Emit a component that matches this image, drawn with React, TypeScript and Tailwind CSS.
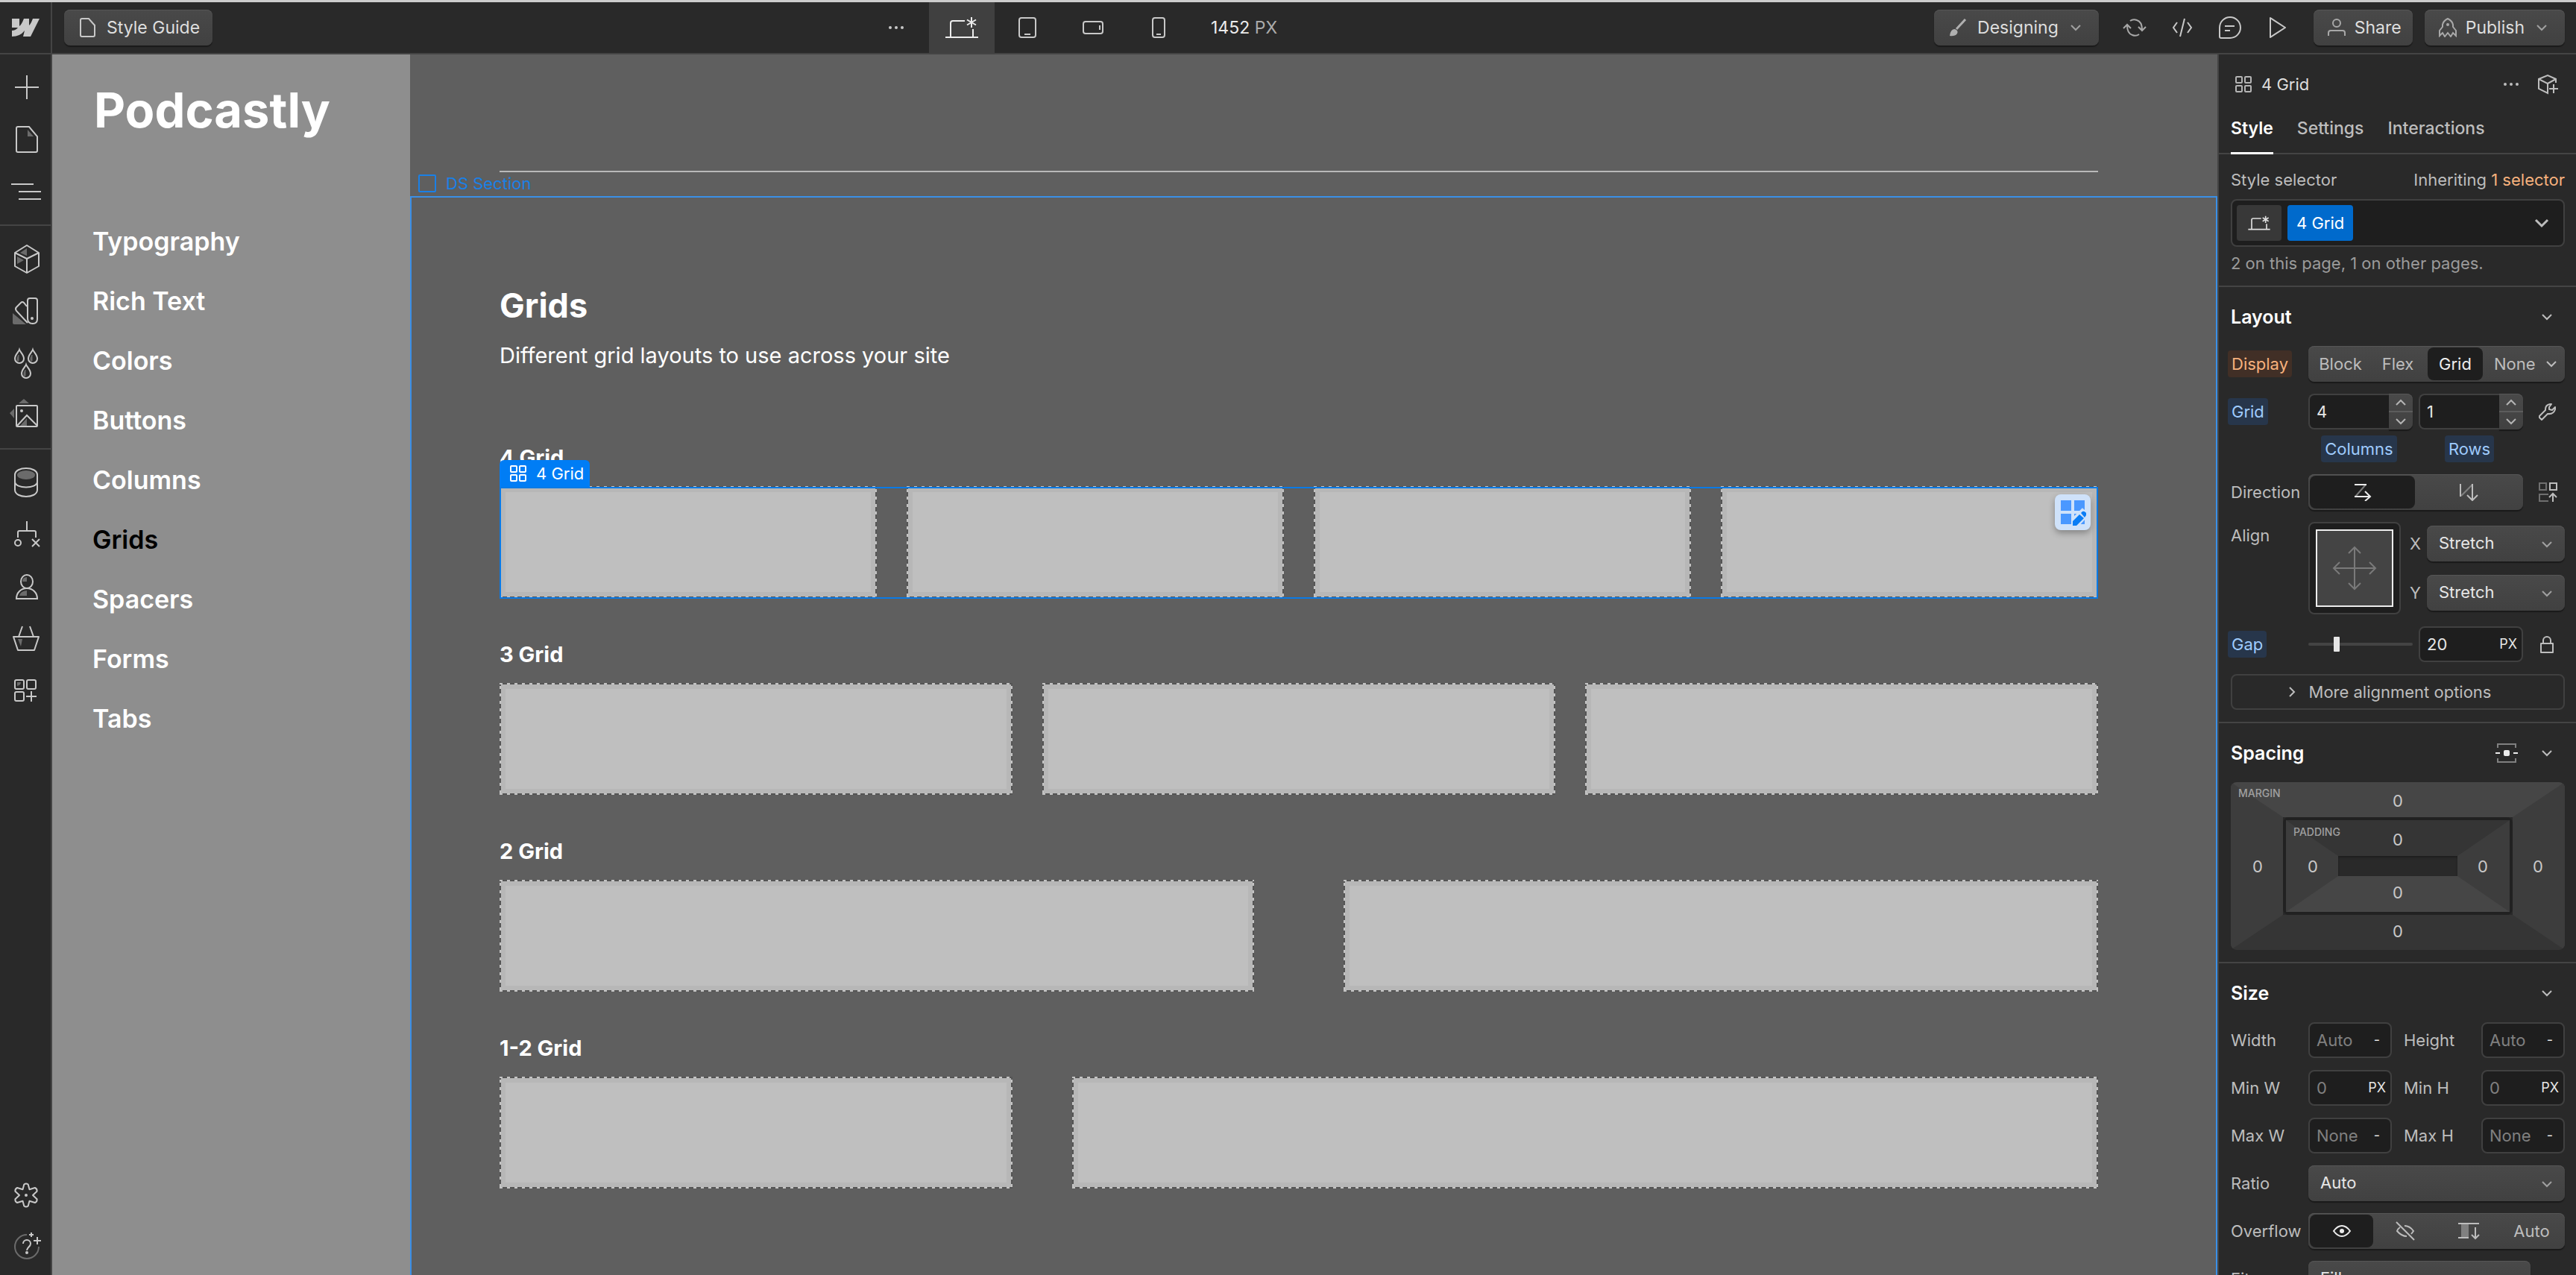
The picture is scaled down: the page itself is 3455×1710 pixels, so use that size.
import type { ReactNode } from 'react';

const raised =
  'bg-linear-to-b from-[#494949] to-[#414141] shadow-[inset_0_1px_0_#565656,0_2px_1px_#1a1a1a]';
const well = 'border-2 border-[#404040] bg-[#1e1e1e]';

function Svg({ w, h, className = '', children }: { w: number; h: number; className?: string; children: ReactNode }) {
  return (
    <svg
      width={w}
      height={h}
      viewBox={`0 0 ${w} ${h}`}
      fill="none"
      stroke="currentColor"
      strokeWidth="2"
      aria-hidden="true"
      className={`shrink-0 ${className}`}
    >
      {children}
    </svg>
  );
}

function Chevron({ className = '' }: { className?: string }) {
  return (
    <Svg w={14} h={10} className={className}>
      <path d="M1 2L7 8L13 2" />
    </Svg>
  );
}

function Dots() {
  return (
    <Svg w={22} h={6}>
      <g fill="currentColor" stroke="none">
        <circle cx="3" cy="3" r="2" />
        <circle cx="11" cy="3" r="2" />
        <circle cx="19" cy="3" r="2" />
      </g>
    </Svg>
  );
}

function FourSquares({ className = '' }: { className?: string }) {
  return (
    <Svg w={24} h={24} className={className}>
      <rect x="2" y="2" width="8" height="8" rx="1" />
      <rect x="14" y="2" width="8" height="8" rx="1" />
      <rect x="2" y="14" width="8" height="8" rx="1" />
      <rect x="14" y="14" width="8" height="8" rx="1" />
    </Svg>
  );
}

function LaptopPaths() {
  return (
    <>
      <path d="M0 28H44M7 28V9q0-3 3-3H26M37 28V17" />
      <path d="M35 1V15M29 4.500L41 11.500M41 4.500L29 11.500" />
    </>
  );
}

const DIM = '#6b6b6b';

const railGroups: { label: string; icon: ReactNode }[][] = [
  [
    { label: 'Add elements', icon: <path d="M8 22H40M24 6V38" /> },
    {
      label: 'Pages',
      icon: (
        <>
          <path d="M25 9V18H33Z" fill={DIM} stroke="none" />
          <path d="M10 7a2 2 0 0 1 2-2H27L38 18V37a2 2 0 0 1-2 2H12a2 2 0 0 1-2-2Z" />
        </>
      ),
    },
    { label: 'Navigator', icon: <path d="M3 12H33M13 22H43M13 32H43" /> },
  ],
  [
    {
      label: 'Components',
      icon: (
        <>
          <path d="M15 14L24 8V18ZM11 19L20 24L11 29Z" fill={DIM} stroke="none" />
          <path d="M24 4L40 14V32L24 41L8 32V14ZM8 14L24 22L40 14M24 22V41" strokeLinejoin="round" />
        </>
      ),
    },
    {
      label: 'Variables',
      icon: (
        <>
          <path d="M5 25V38q0 2 2 2H23Z" fill={DIM} stroke="none" />
          <path d="M25 8q0-3 3-3H35q3 0 3 3V33q0 6-6 6q-7 0-7-7Z" />
          <path d="M24 16L20 11q-2-2-4 0L10 17q-2 2 0 5L25 38" />
          <circle cx="31" cy="32" r="2" fill="currentColor" stroke="none" />
        </>
      ),
    },
    {
      label: 'Style selectors',
      icon: (
        <>
          <path d="M13 11V19H11V15ZM31 11V19H29V15ZM22 31V39H20V35Z" fill={DIM} stroke={DIM} strokeWidth="1" />
          <path d="M14 4C13 7 8 11 8 16a6 6 0 0 0 12 0C20 11 15 7 14 4Z" />
          <path d="M32 4C31 7 26 11 26 16a6 6 0 0 0 12 0C38 11 33 7 32 4Z" />
          <path d="M23 24C22 27 17 31 17 36a6 6 0 0 0 12 0C29 31 24 27 23 24Z" />
        </>
      ),
    },
    {
      label: 'Assets',
      icon: (
        <>
          <path d="M20 0L27 6H13ZM1 19L7 13V26ZM24 26V36H15Z" fill={DIM} stroke="none" />
          <rect x="10" y="9" width="28" height="28" rx="1" />
          <path d="M11 36L24 22L38 36" />
          <circle cx="17" cy="16" r="2" fill="currentColor" stroke="none" />
        </>
      ),
    },
  ],
  [
    {
      label: 'CMS',
      icon: (
        <>
          <ellipse cx="23" cy="12" rx="12" ry="6" fill={DIM} stroke="none" />
          <path d="M8 12C8 0 38 0 38 12V32C38 44 8 44 8 32ZM8 21C8 31 38 31 38 21" />
        </>
      ),
    },
    {
      label: 'Logic',
      icon: (
        <>
          <path d="M24 4V17M12 26V19q0-2 2-2H34q2 0 2 2V26M31 28L41 38M41 28L31 38" />
          <circle cx="12" cy="33" r="4" />
        </>
      ),
    },
    {
      label: 'Users',
      icon: (
        <>
          <path d="M18 15q0-6 6-6V15ZM14 34q1-6 10-7V34Z" fill={DIM} stroke="none" />
          <ellipse cx="24" cy="15" rx="8" ry="9" />
          <path d="M10 38C10 30 16 24 24 24S38 30 38 38Z" />
        </>
      ),
    },
    {
      label: 'Ecommerce',
      icon: (
        <>
          <path d="M12 22H18L16 32Z" fill={DIM} stroke="none" />
          <path d="M18 5L13 19M28 5L33 19M6 19H40L34 37H12Z" strokeLinejoin="round" />
        </>
      ),
    },
    {
      label: 'Apps',
      icon: (
        <>
          <path d="M11 10H16Q16 14 11 15Z" fill={DIM} stroke="none" />
          <rect x="8" y="7" width="12" height="12" rx="2" />
          <rect x="24" y="7" width="12" height="12" rx="2" />
          <rect x="8" y="23" width="12" height="12" rx="2" />
          <path d="M30 22V36M23 29H37" />
        </>
      ),
    },
  ],
];

const railFooter: { label: string; icon: ReactNode }[] = [
  {
    label: 'Settings',
    icon: (
      <>
        <path
          strokeLinejoin="round"
          d="M20.300 7.500Q23 5.500 25.700 7.500L27.500 14.200L34.900 12Q38 13.500 37.600 16.700L32 22L37.600 27.300Q38 30.500 34.900 32L27.500 29.800L25.700 36.500Q23 38.500 20.300 36.500L18.500 29.800L11.100 32Q8 30.500 8.400 27.300L14 22L8.400 16.700Q8 13.500 11.100 12L18.500 14.200Z"
        />
        <circle cx="23" cy="22" r="2" fill="currentColor" stroke="none" />
      </>
    ),
  },
  {
    label: 'Help',
    icon: (
      <>
        <path d="M24 7A16 16 0 1 0 40 23" stroke={DIM} />
        <path d="M19 19a5 5 0 0 1 10 0c0 4-5 5-5 9M30 4V10M27 7H33M38 10V20M33 15H43" />
        <circle cx="24" cy="31" r="2" fill="currentColor" stroke="none" />
      </>
    ),
  },
];

function RailButton({ label, tall, children }: { label: string; tall: boolean; children: ReactNode }) {
  return (
    <button
      type="button"
      aria-label={label}
      className={`flex w-full items-center justify-center text-[#c8c8c8] ${tall ? 'h-[70px]' : 'h-[68px]'}`}
    >
      <Svg w={44} h={44}>{children}</Svg>
    </button>
  );
}

function Rail() {
  return (
    <nav aria-label="Tools" className="flex w-[70px] shrink-0 flex-col border-r-2 border-[#444] bg-[#292929] pb-[5px]">
      {railGroups.map((group, i) => (
        <div key={i} className={`py-[9px] ${i < 2 ? 'border-b-2 border-[#444]' : ''}`}>
          {group.map((item) => (
            <RailButton key={item.label} label={item.label} tall>
              {item.icon}
            </RailButton>
          ))}
        </div>
      ))}
      <div className="mt-auto">
        {railFooter.map((item) => (
          <RailButton key={item.label} label={item.label} tall={false}>
            {item.icon}
          </RailButton>
        ))}
      </div>
    </nav>
  );
}

function TopBar() {
  return (
    <header className="flex h-[70px] shrink-0 border-b-2 border-[#444] bg-[#292929] text-[23px] leading-8 text-[#dedede]">
      <a href="#dashboard" aria-label="Dashboard" className="flex w-[70px] shrink-0 items-center justify-center border-r-2 border-[#444] text-[#c8c8c8]">
        <Svg w={40} h={26}>
          <path
            fill="currentColor"
            stroke="none"
            d="M2 1H12V11Q15 9 18 1H25V10Q27 9 30 1H39L27 25H17L19 17Q13 25 2 25V17Q7 17 10 13H2Z"
          />
        </Svg>
      </a>
      <div className="flex flex-1 items-center justify-between pr-[15px] pl-4">
        <button type="button" className={`flex h-12 items-center gap-3 rounded-lg px-[17px] ${raised}`}>
          <Svg w={28} h={26} className="text-[#c8c8c8]">
            <path d="M5 3q0-2 2-2H16L24 10V23q0 2-2 2H7q-2 0-2-2Z" />
          </Svg>
          Style Guide
        </button>

        <div className="flex items-center self-stretch pr-2 text-[#c8c8c8]">
          <button type="button" aria-label="More breakpoints" className="flex w-[88px] items-center justify-center self-stretch">
            <Dots />
          </button>
          <button type="button" aria-label="Desktop" className="flex w-[88px] items-center justify-center self-stretch bg-[#404040] text-[#ececec]">
            <Svg w={44} h={30}>
              <LaptopPaths />
            </Svg>
          </button>
          <button type="button" aria-label="Tablet" className="flex w-[88px] items-center justify-center self-stretch">
            <Svg w={24} h={28}>
              <rect x="1" y="1" width="22" height="26" rx="3" />
              <path d="M8 23H16" />
            </Svg>
          </button>
          <button type="button" aria-label="Mobile landscape" className="flex w-[88px] items-center justify-center self-stretch">
            <Svg w={28} h={18}>
              <rect x="1" y="1" width="26" height="16" rx="3" />
              <path d="M23 6V12" />
            </Svg>
          </button>
          <button type="button" aria-label="Mobile portrait" className="flex w-[88px] items-center justify-center self-stretch">
            <Svg w={18} h={28}>
              <rect x="1" y="1" width="16" height="26" rx="3" />
              <path d="M6 23H12" />
            </Svg>
          </button>
          <span className="pl-[26px] whitespace-pre">
            <span className="text-[#ececec]">1452</span> <span className="text-[#ababab]">PX</span>
          </span>
        </div>

        <div className="flex items-center gap-4">
          <button type="button" className={`flex h-12 items-center rounded-lg pr-6 pl-5 ${raised}`}>
            <Svg w={24} h={24} className="mr-3.5 text-[#b0b0b0]">
              <path d="M22 1L10 14" strokeWidth="3" />
              <path d="M1 23Q2 14 8 14q5 2 3 6q-3 4-10 3Z" fill="currentColor" stroke="none" />
            </Svg>
            Designing
            <Chevron className="ml-4 text-[#a0a0a0]" />
          </button>
          <div className="flex text-[#c8c8c8]">
            <button type="button" aria-label="Sync status" className="flex h-12 w-16 items-center justify-center text-[#a8a8a8]">
              <Svg w={32} h={26}>
                <path d="M10 4Q14 1 19 3Q26 5 26 16M22 22Q18 25 13 23Q6 21 6 10M1 14L6 9L11 14M21 12L26 17L31 12" />
              </Svg>
            </button>
            <button type="button" aria-label="Code" className="flex h-12 w-16 items-center justify-center">
              <Svg w={28} h={26}>
                <path d="M7 6L2 13L7 20M21 6L26 13L21 20M17 1L11 25" />
              </Svg>
            </button>
            <button type="button" aria-label="Comments" className="flex h-12 w-16 items-center justify-center">
              <Svg w={32} h={30}>
                <path d="M4 29q-2 0-2-2V15A14 14 0 1 1 16 29Z" />
                <path d="M9 13H22M9 19H16" />
              </Svg>
            </button>
            <button type="button" aria-label="Preview" className="flex h-12 w-16 items-center justify-center">
              <Svg w={24} h={30}>
                <path d="M2 2L22 15L2 28Z" strokeLinejoin="round" />
              </Svg>
            </button>
          </div>
          <button type="button" className={`flex h-12 items-center gap-3 rounded-lg pr-[15px] pl-[19px] ${raised}`}>
            <Svg w={24} h={24} className="text-[#a8a8a8]">
              <ellipse cx="12" cy="6" rx="5" ry="5" />
              <path d="M1 23V19q0-3 3-3H20q3 0 3 3V23" />
            </Svg>
            Share
          </button>
          <button type="button" className={`flex h-12 items-center rounded-lg pr-6 pl-[19px] ${raised}`}>
            <Svg w={24} h={26} className="mr-3 text-[#a8a8a8]">
              <path d="M1 24V17L5 12V9Q6 4 12 1Q18 4 19 9V12L23 17V24L19 20L16 25L12 20L8 25L5 20Z" />
              <circle cx="12" cy="9" r="2" fill="currentColor" stroke="none" />
            </Svg>
            Publish
            <Chevron className="ml-4 text-[#a0a0a0]" />
          </button>
        </div>
      </div>
    </header>
  );
}

const siteLinks = ['Typography', 'Rich Text', 'Colors', 'Buttons', 'Columns', 'Grids', 'Spacers', 'Forms', 'Tabs'];

function SiteSidebar() {
  return (
    <aside className="w-[480px] shrink-0 bg-[#8e8e8e] pt-[35px] text-white">
      <p className="px-14 text-[65px] leading-[80px] font-bold">Podcastly</p>
      <ul className="mt-24 px-[54px] text-[34px] leading-[80px] font-semibold">
        {siteLinks.map((name) => (
          <li key={name}>
            <a href={`#${name}`} className={name === 'Grids' ? 'text-black' : ''}>
              {name}
            </a>
          </li>
        ))}
      </ul>
    </aside>
  );
}

function Cell({ className = '' }: { className?: string }) {
  return (
    <div className={`h-[150px] bg-[repeating-linear-gradient(90deg,#c4c4c4_0_4px,#555_4px_10px)] py-[2px] ${className}`}>
      <div className="h-full bg-[repeating-linear-gradient(0deg,#c4c4c4_0_4px,#555_4px_10px)] px-[2px]">
        <div className="h-full border-6 border-[#b7b7b7] bg-[#bfbfbf]" />
      </div>
    </div>
  );
}

function GridBlock({ title, children }: { title: string; children: ReactNode }) {
  return (
    <div className="mb-14">
      <h3 className="mb-[18px] text-[29px] leading-10 font-bold">{title}</h3>
      {children}
    </div>
  );
}

function Canvas() {
  return (
    <main className="flex min-w-0 flex-1 bg-[#5f5f5f]">
      <SiteSidebar />
      <div className="flex min-w-0 flex-1 flex-col">
        <hr className="mt-[156px] mr-40 ml-[120px] border-t-2 border-[#b9b9b9]" />
        <section className="relative mt-8 flex-1 border-2 border-b-0 border-[#3a8fe6] pt-[117px] pr-[158px] pl-[118px] text-white">
          <div className="absolute bottom-full left-2 flex h-[38px] items-center gap-3 text-[22px] leading-8 text-[#1a80e6]">
            <Svg w={26} h={26}>
              <rect x="2" y="2" width="22" height="22" rx="1" />
            </Svg>
            DS Section
          </div>
          <h2 className="text-[45px] leading-[56px] font-bold">Grids</h2>
          <p className="mt-[19px] mb-[97px] text-[29px] leading-10">Different grid layouts to use across your site</p>

          <GridBlock title="4 Grid">
            <div className="relative grid grid-cols-4 gap-10">
              <Cell />
              <Cell />
              <Cell />
              <Cell />
              <div className="pointer-events-none absolute inset-x-0 top-px -bottom-px border-2 border-[#0a7ae6]" />
              <div className="absolute bottom-full left-0 -mb-px flex h-9 items-center gap-3 rounded-t-md bg-[#007df5] pr-2 pl-[13px] text-[22px] leading-8">
                <FourSquares />
                4 Grid
              </div>
              <button
                type="button"
                aria-label="Edit grid"
                className="absolute top-[11px] right-[10px] flex size-12 items-center justify-center rounded-lg bg-[#cfe2fa] text-[#0a7df5] shadow-[0_4px_8px_rgba(0,0,0,0.3)]"
              >
                <Svg w={36} h={36}>
                  <path d="M2 2H16V16H2ZM20 2H34V16H20ZM2 20H16V34H2ZM20 20H34V34H20Z" fill="#4a98ff" stroke="none" />
                  <path d="M18 36V28L31 15L38 21L24 36Z" fill="#cfe2fa" stroke="#cfe2fa" strokeWidth="4" />
                  <path d="M18 36V30L27 21L33 26L23 36ZM29 19L31 17Q33 16 35 18Q38 20 36 22L34 25Z" fill="currentColor" stroke="none" />
                </Svg>
              </button>
            </div>
          </GridBlock>
          <GridBlock title="3 Grid">
            <div className="grid grid-cols-3 gap-10">
              <Cell />
              <Cell />
              <Cell />
            </div>
          </GridBlock>
          <GridBlock title="2 Grid">
            <div className="grid grid-cols-2 gap-[120px]">
              <Cell />
              <Cell />
            </div>
          </GridBlock>
          <GridBlock title="1-2 Grid">
            <div className="grid grid-cols-[1fr_2fr] gap-20">
              <Cell />
              <Cell />
            </div>
          </GridBlock>
        </section>
      </div>
    </main>
  );
}

function SectionHeader({ title, children }: { title: string; children?: ReactNode }) {
  return (
    <div className="flex h-[79px] items-center justify-between">
      <h2 className="text-[25px] leading-8 font-semibold text-white">{title}</h2>
      <div className="flex items-center gap-8 pr-[17px]">
        {children}
        <button type="button" aria-label={`Collapse ${title}`}>
          <Chevron />
        </button>
      </div>
    </div>
  );
}

function Tag({ tone, htmlFor, children }: { tone: 'blue' | 'orange'; htmlFor?: string; children: ReactNode }) {
  const c = tone === 'blue' ? 'bg-[#27364b] text-[#9fcbfd]' : 'bg-[#412f26] text-[#f6b17d]';
  return (
    <label htmlFor={htmlFor} className={`-ml-1 inline-block rounded-sm px-[5px] leading-9 ${c}`}>
      {children}
    </label>
  );
}

function Dropdown({ id, value, label, className = '' }: { id: string; value: string; label?: string; className?: string }) {
  return (
    <div className={`relative ${className}`}>
      <select id={id} aria-label={label} className={`h-12 w-full appearance-none rounded-lg px-4 pb-[2px] text-[#e6e6e6] ${raised}`}>
        <option>{value}</option>
      </select>
      <Chevron className="pointer-events-none absolute top-5 right-[17px] text-[#a0a0a0]" />
    </div>
  );
}

function Stepper({ id, value }: { id: string; value: string }) {
  return (
    <div className="flex h-12 w-[140px]">
      <input id={id} defaultValue={value} className={`h-12 w-[108px] rounded-l-lg border-r-0 pl-[9px] text-[#e6e6e6] ${well}`} />
      <div className={`flex w-8 flex-col rounded-r-lg text-[#b4b4b4] ${raised}`}>
        <button type="button" aria-label={`Increase ${id}`} className="flex flex-1 items-center justify-center border-b-2 border-[#5c5c5c]">
          <Chevron className="rotate-180" />
        </button>
        <button type="button" aria-label={`Decrease ${id}`} className="flex flex-1 items-center justify-center">
          <Chevron />
        </button>
      </div>
    </div>
  );
}

function UnitInput({ id, value, unit, muted, className = '' }: { id: string; value: string; unit: string; muted?: boolean; className?: string }) {
  return (
    <div className={`flex h-12 items-center rounded-lg pl-[9px] ${well} ${className}`}>
      <input
        id={id}
        defaultValue={muted ? undefined : value}
        placeholder={value}
        className="w-0 flex-1 bg-transparent text-[#e6e6e6] placeholder:text-[#808080]"
      />
      <button type="button" aria-label={`${id} unit`} className={`text-[18px] text-[#e6e6e6] ${unit === 'PX' ? 'pr-[6px]' : 'pr-[14px]'}`}>
        {unit}
      </button>
    </div>
  );
}

const sizeFields = [
  ['Width', 'Auto', '-'],
  ['Height', 'Auto', '-'],
  ['Min W', '0', 'PX'],
  ['Min H', '0', 'PX'],
  ['Max W', 'None', '-'],
  ['Max H', 'None', '-'],
];

const activeSeg = 'rounded-lg bg-[#1e1e1e] text-[#ececec]';

function SpacingBox() {
  return (
    <div className="relative rounded-lg border-x-70 border-y-47 border-t-[#464646] border-r-[#3d3d3d] border-b-[#353535] border-l-[#3d3d3d] text-[#c8c8c8]">
      <div className="rounded-lg border-4 border-[#212121]">
        <div className="border-x-70 border-y-48 border-t-[#353535] border-r-[#3d3d3d] border-b-[#464646] border-l-[#3d3d3d]">
          <div className="h-[27px] bg-[#292929] shadow-[inset_0_2px_3px_#1e1e1e]" />
        </div>
      </div>
      <span className="absolute -top-[42px] -left-[60px] text-[14px] leading-5 font-medium text-[#a0a0a0]">MARGIN</span>
      <span className="absolute top-[10px] left-[14px] text-[14px] leading-5 font-medium text-[#a0a0a0]">PADDING</span>
      <button type="button" aria-label="Margin top" className="absolute inset-x-0 -top-[38px]">0</button>
      <button type="button" aria-label="Margin bottom" className="absolute inset-x-0 -bottom-[38px]">0</button>
      <button type="button" aria-label="Margin left" className="absolute inset-y-0 -left-[68px] w-[68px]">0</button>
      <button type="button" aria-label="Margin right" className="absolute inset-y-0 -right-[68px] w-[68px]">0</button>
      <button type="button" aria-label="Padding top" className="absolute inset-x-20 top-[14px]">0</button>
      <button type="button" aria-label="Padding bottom" className="absolute inset-x-20 bottom-[14px]">0</button>
      <button type="button" aria-label="Padding left" className="absolute inset-y-0 left-[6px] w-[68px]">0</button>
      <button type="button" aria-label="Padding right" className="absolute inset-y-0 right-[6px] w-[68px]">0</button>
    </div>
  );
}

function StylePanel() {
  const row = 'mb-4 grid grid-cols-[104px_1fr] items-center';
  const sectionBox = 'border-b-2 border-[#444] pr-[15px] pl-4';
  return (
    <aside className="flex w-[481px] shrink-0 flex-col overflow-hidden border-l-2 border-[#444] bg-[#292929] text-[22px] leading-8 text-[#bdbdbd]">
      <div className="flex h-20 shrink-0 items-center justify-between pr-6 pl-[21px]">
        <div className="flex items-center gap-3 text-[#dedede]">
          <FourSquares className="text-[#b4b4b4]" />
          4 Grid
        </div>
        <div className="flex items-center gap-6">
          <button type="button" aria-label="More actions">
            <Dots />
          </button>
          <button type="button" aria-label="Create component">
            <Svg w={28} h={28}>
              <path d="M25 12V7L14 2L2 7V20L14 26V13L2 7M14 13L25 7M22 14V26M16 20H28" />
            </Svg>
          </button>
        </div>
      </div>
      <div role="tablist" className="flex h-[54px] shrink-0 gap-8 border-b-2 border-[#444] px-4 text-[23px] font-medium">
        <button type="button" role="tab" aria-selected="true" className="-mb-[2px] border-b-3 border-white pb-[13px] font-semibold text-white">
          Style
        </button>
        <button type="button" role="tab" aria-selected="false" className="pb-[14px]">
          Settings
        </button>
        <button type="button" role="tab" aria-selected="false" className="pb-[14px]">
          Interactions
        </button>
      </div>

      <section className={`${sectionBox} shrink-0 pt-[18px] pb-[14px]`}>
        <div className="flex justify-between">
          <span>Style selector</span>
          <span>
            Inheriting{' '}
            <a href="#inherited" className="text-[#f6b17d]">
              1 selector
            </a>
          </span>
        </div>
        <div className={`mt-[10px] flex h-16 items-center gap-2 rounded-lg px-[6px] ${well}`}>
          <button type="button" aria-label="Base breakpoint" className="flex h-12 w-[60px] items-center justify-center rounded-sm bg-[#383838] text-[#dedede]">
            <svg width="30" height="20" viewBox="0 0 44 30" fill="none" stroke="currentColor" strokeWidth="2.500" aria-hidden="true">
              <LaptopPaths />
            </svg>
          </button>
          <button type="button" className="h-12 rounded-sm bg-[#006acc] px-3 text-white">
            4 Grid
          </button>
          <button type="button" aria-label="Show selectors" className="mr-[13px] ml-auto">
            <Svg w={20} h={14}>
              <path d="M2 3L10 11L18 3" strokeWidth="3" />
            </Svg>
          </button>
        </div>
        <p className="mt-[6px] text-[#9b9b9b]">2 on this page, 1 on other pages.</p>
      </section>

      <section className={`${sectionBox} shrink-0`}>
        <SectionHeader title="Layout" />
        <div className={row}>
          <div>
            <Tag tone="orange">Display</Tag>
          </div>
          <div role="group" aria-label="Display" className={`flex h-12 rounded-lg p-[2px] ${raised}`}>
            <button type="button" className="w-[82px]">Block</button>
            <button type="button" className="w-[76px] pr-1">Flex</button>
            <button type="button" aria-pressed="true" className={`w-[74px] ${activeSeg}`}>Grid</button>
            <button type="button" className="flex flex-1 items-center justify-between pr-[9px] pl-[15px]">
              None
              <Chevron />
            </button>
          </div>
        </div>

        <div className="grid grid-cols-[104px_140px_8px_140px_1fr] gap-y-2">
          <div className="self-center">
            <Tag tone="blue" htmlFor="columns">Grid</Tag>
          </div>
          <Stepper id="columns" value="4" />
          <span />
          <Stepper id="rows" value="1" />
          <button type="button" aria-label="Edit grid tracks" className="ml-5">
            <Svg w={24} h={24}>
              <path d="M16 2Q10 3 10 9V10L2 18V20L5 23L13 15Q21 16 23 9V6L19 10L15 9V6L18 2Z" strokeLinejoin="round" />
            </Svg>
          </button>
          <span />
          <div className="text-center">
            <Tag tone="blue" htmlFor="columns">Columns</Tag>
          </div>
          <span />
          <div className="text-center">
            <Tag tone="blue" htmlFor="rows">Rows</Tag>
          </div>
        </div>

        <div className={`mt-4 ${row}`}>
          <span>Direction</span>
          <div className="flex items-center">
            <div role="group" aria-label="Direction" className={`flex h-12 w-[288px] rounded-lg p-[2px] ${raised}`}>
              <button type="button" aria-label="Row" aria-pressed="true" className={`flex w-[141px] items-center justify-center ${activeSeg}`}>
                <Svg w={24} h={24}>
                  <path d="M16 2L2 18" stroke="#7a7a7a" />
                  <path d="M1 2H17M1 18H22M15 11L22 18L15 24" />
                </Svg>
              </button>
              <button type="button" aria-label="Column" className="flex flex-1 items-center justify-center">
                <Svg w={26} h={24}>
                  <path d="M3 17L18 2" stroke="#808080" />
                  <path d="M2 1V18M18 1V22M11 16L18 23L25 16" />
                </Svg>
              </button>
            </div>
            <button type="button" aria-label="Reverse order" className="ml-5">
              <Svg w={28} h={28}>
                <path d="M2 2H11V11H2ZM14 17H2V26H14" stroke="#6f6f6f" />
                <path d="M16 2H25V11H16ZM20 27V17M15 21L20 16L25 21" />
              </Svg>
            </button>
          </div>
        </div>

        <div className="mb-4 grid grid-cols-[104px_124px_1fr]">
          <span className="mt-0.5">Align</span>
          <div className={`rounded-lg p-2 ${well}`}>
            <button type="button" aria-label="Alignment" className="flex size-[104px] items-center justify-center border-2 border-[#ececec] bg-[#444] text-[#7a7a7a]">
              <Svg w={60} h={60}>
                <path d="M30 2V58M2 30H58M22 10L30 2L38 10M22 50L30 58L38 50M10 22L2 30L10 38M50 22L58 30L50 38" />
              </Svg>
            </button>
          </div>
          <div className="flex flex-col justify-center gap-[18px] pl-3">
            {['X', 'Y'].map((axis) => (
              <div key={axis} className="flex items-center">
                <label htmlFor={`align-${axis}`} className="w-[23px]">
                  {axis}
                </label>
                <Dropdown id={`align-${axis}`} value="Stretch" className="flex-1" />
              </div>
            ))}
          </div>
        </div>

        <div className={row}>
          <div>
            <Tag tone="blue" htmlFor="gap">Gap</Tag>
          </div>
          <div className="flex items-center">
            <input
              type="range"
              aria-label="Gap"
              min="0"
              max="100"
              defaultValue="26"
              className="mr-2 h-1 w-[140px] appearance-none rounded-full bg-[#444] [&::-webkit-slider-thumb]:h-5 [&::-webkit-slider-thumb]:w-2 [&::-webkit-slider-thumb]:appearance-none [&::-webkit-slider-thumb]:rounded-[1px] [&::-webkit-slider-thumb]:bg-[#e6e6e6]"
            />
            <UnitInput id="gap" value="20" unit="PX" className="w-[140px]" />
            <button type="button" aria-label="Lock gap" className="ml-[22px]">
              <Svg w={20} h={24}>
                <path d="M2 11H18V23H2ZM5 11V7a5 5 0 0 1 10 0V11" strokeLinejoin="round" />
              </Svg>
            </button>
          </div>
        </div>

        <button type="button" className="mb-4 flex h-12 w-full items-center justify-center gap-4 rounded-lg border-2 border-[#404040]">
          <Chevron className="-rotate-90" />
          <span className="pr-6">More alignment options</span>
        </button>
      </section>

      <section className={`${sectionBox} shrink-0 pb-4`}>
        <SectionHeader title="Spacing">
          <button type="button" aria-label="Center element">
            <Svg w={30} h={28}>
              <path d="M3 7V2H27V7M3 21V26H27V21" stroke="#808080" />
              <path d="M0 14H6M24 14H30" stroke="#ececec" />
              <rect x="11" y="10" width="8" height="8" rx="2" fill="#ececec" stroke="none" />
            </Svg>
          </button>
        </SectionHeader>
        <SpacingBox />
      </section>

      <section className="shrink-0 pr-[15px] pl-4">
        <SectionHeader title="Size" />
        <div className="mb-4 grid grid-cols-[104px_112px_120px_112px] items-center gap-y-4">
          {sizeFields.map(([name, value, unit], i) => (
            <div key={name} className="contents">
              <label htmlFor={name} className={i % 2 ? 'pl-4' : ''}>
                {name}
              </label>
              <UnitInput id={name} value={value} unit={unit} muted />
            </div>
          ))}
        </div>
        <div className={row}>
          <label htmlFor="ratio">Ratio</label>
          <Dropdown id="ratio" value="Auto" />
        </div>
        <div className={row}>
          <span>Overflow</span>
          <div role="group" aria-label="Overflow" className={`flex h-12 rounded-lg p-[2px] ${raised}`}>
            <button type="button" aria-label="Visible" aria-pressed="true" className={`flex flex-1 items-center justify-center ${activeSeg}`}>
              <Svg w={26} h={18}>
                <path d="M2 9Q7 2 13 2T24 9Q19 16 13 16T2 9Z" />
                <circle cx="13" cy="9" r="3" fill="currentColor" stroke="none" />
              </Svg>
            </button>
            <button type="button" aria-label="Hidden" className="flex flex-1 items-center justify-center">
              <Svg w={26} h={26}>
                <path d="M1 1L25 25" />
                <path d="M6 8Q3 10 2 13Q8 20 15 20M12 6Q19 6 24 13L21 17" />
              </Svg>
            </button>
            <button type="button" aria-label="Scroll" className="flex flex-1 items-center justify-center">
              <Svg w={30} h={24}>
                <rect x="5" y="2" width="10" height="19" fill="#808080" stroke="none" />
                <path d="M1 2H29M1 21H15M24 7V22M19 17L24 22L29 17" />
              </Svg>
            </button>
            <button type="button" className="flex-1">Auto</button>
          </div>
        </div>
        <div className={row}>
          <label htmlFor="fit">Fit</label>
          <Dropdown id="fit" value="Fill" className="w-[298px]" />
        </div>
      </section>
    </aside>
  );
}

export default function App() {
  return (
    <div className="flex h-screen flex-col overflow-hidden border-t-3 border-[#cccccc] bg-[#292929] font-[Inter,sans-serif]">
      <TopBar />
      <div className="flex min-h-0 flex-1">
        <Rail />
        <Canvas />
        <StylePanel />
      </div>
    </div>
  );
}
